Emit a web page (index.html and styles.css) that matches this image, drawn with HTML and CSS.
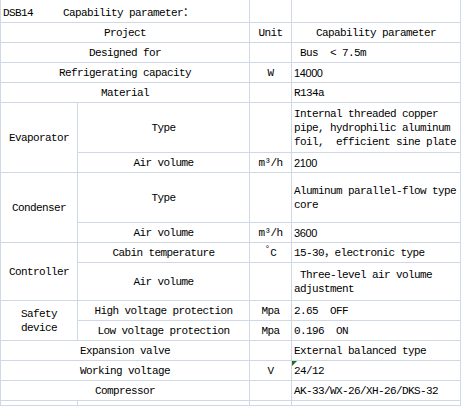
FILE: index.html
```html
<!DOCTYPE html>
<html>
<head>
<meta charset="utf-8">
<link rel="stylesheet" href="styles.css">
</head>
<body>
<div class="sheet">
  <div class="c s2 l first">DSB14     Capability parameter：</div>
  <div class="c"></div>
  <div class="c"></div>

  <div class="c s2">Project</div>
  <div class="c">Unit</div>
  <div class="c">Capability parameter</div>

  <div class="c s2">Designed for</div>
  <div class="c"></div>
  <div class="c l"> Bus  &lt; 7.5m</div>

  <div class="c s2">Refrigerating capacity</div>
  <div class="c">W</div>
  <div class="c l num">14000</div>

  <div class="c s2">Material</div>
  <div class="c"></div>
  <div class="c l">R134a</div>

  <div class="c r2">Evaporator</div>
  <div class="c">Type</div>
  <div class="c"></div>
  <div class="c l"><span class="w">Internal threaded copper<br>pipe, hydrophilic aluminum<br>foil,  efficient sine plate</span></div>
  <div class="c">Air volume</div>
  <div class="c">m³/h</div>
  <div class="c l num">2100</div>

  <div class="c r2">Condenser</div>
  <div class="c">Type</div>
  <div class="c"></div>
  <div class="c l"><span class="w">Aluminum parallel-flow type<br>core</span></div>
  <div class="c">Air volume</div>
  <div class="c">m³/h</div>
  <div class="c l num">3600</div>

  <div class="c r2">Controller</div>
  <div class="c">Cabin temperature</div>
  <div class="c"><span class="deg">°</span>C</div>
  <div class="c l">15-30，electronic type</div>
  <div class="c">Air volume</div>
  <div class="c"></div>
  <div class="c l"><span class="w"> Three-level air volume<br>adjustment</span></div>

  <div class="c r2"><span class="w ctr">Safety<br>device</span></div>
  <div class="c">High voltage protection</div>
  <div class="c">Mpa</div>
  <div class="c l">2.65  OFF</div>
  <div class="c">Low voltage protection</div>
  <div class="c">Mpa</div>
  <div class="c l">0.196  ON</div>

  <div class="c s2">Expansion valve</div>
  <div class="c"></div>
  <div class="c l">External balanced type</div>

  <div class="c s2">Working voltage</div>
  <div class="c">V</div>
  <div class="c l flag">24/12</div>

  <div class="c s2">Compressor</div>
  <div class="c"></div>
  <div class="c l">AK-33/WX-26/XH-26/DKS-32</div>

  <div class="c"></div>
  <div class="c"></div>
  <div class="c"></div>
  <div class="c"></div>
</div>
</body>
</html>
```

FILE: styles.css
```css
html, body {
  margin: 0;
  padding: 0;
  background: #ffffff;
  overflow: hidden;
}

.sheet {
  display: grid;
  grid-template-columns: 77px 172px 42px 169px;
  grid-template-rows: 23px 20px 20px 20px 20px 50px 20px 50px 20px 20px 38px 20px 20px 20px 20px 20px 5px;
  width: 460px;
  border-left: 1px solid #d0d7e5;
  font-family: "Liberation Mono", "Noto Sans CJK SC", monospace;
  font-size: 11px;
  line-height: 14px;
  letter-spacing: -0.6px;
  color: #000;
}

.c {
  box-sizing: border-box;
  border-right: 1px solid #d0d7e5;
  border-bottom: 1px solid #d0d7e5;
  display: flex;
  align-items: center;
  justify-content: center;
  white-space: pre;
  overflow: hidden;
}

.l {
  justify-content: flex-start;
  padding-left: 2px;
}

.s2 {
  grid-column: span 2;
}

.r2 {
  grid-row: span 2;
}

.first {
  padding-top: 3px;
}

.num {
  font-family: "Liberation Sans", Arial, sans-serif;
  font-size: 11px;
  letter-spacing: -0.4px;
}

.deg {
  font-size: 9px;
  position: relative;
  top: -4px;
  letter-spacing: 0;
}

.w {
  display: block;
}

.ctr {
  text-align: center;
}

.flag {
  position: relative;
}

.flag::before {
  content: "";
  position: absolute;
  top: 0;
  left: 0;
  border-top: 5px solid #1f6f1f;
  border-right: 5px solid transparent;
}
```
